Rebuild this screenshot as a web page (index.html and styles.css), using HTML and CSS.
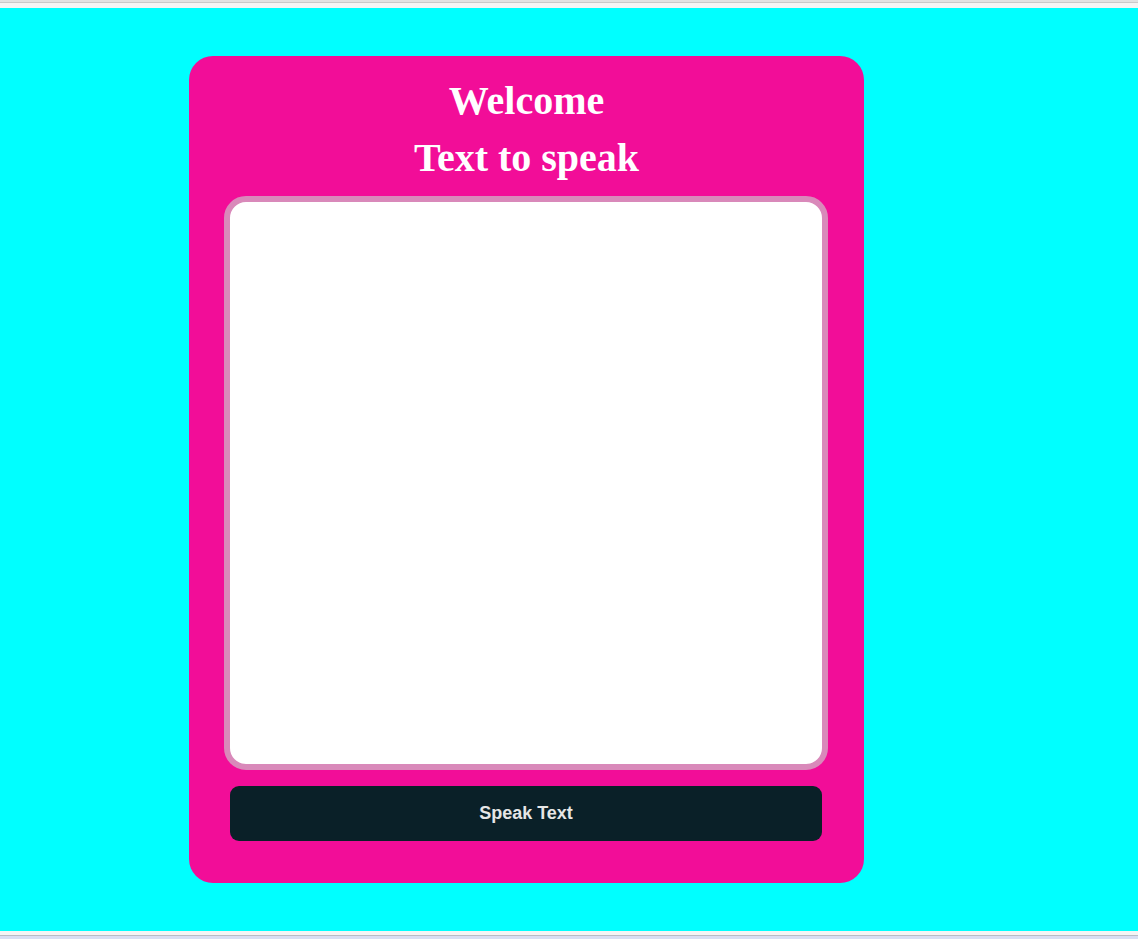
FILE: index.html
```html
<!DOCTYPE html>
<html lang="en">
<head>
<meta charset="utf-8">
<title>Text to speak</title>
<link rel="stylesheet" href="styles.css">
</head>
<body>
<div class="chrome-top"></div>
<main class="stage">
  <section class="card">
    <h1 class="title">Welcome</h1>
    <h1 class="title">Text to speak</h1>
    <textarea class="input"></textarea>
    <button class="speak" type="button">Speak Text</button>
  </section>
</main>
<div class="chrome-bottom"></div>
</body>
</html>
```
FILE: styles.css
```css
html, body {
  margin: 0;
  padding: 0;
}
body {
  width: 1138px;
  height: 939px;
  overflow: hidden;
  display: flex;
  flex-direction: column;
  background: #ffffff;
}
.chrome-top {
  height: 8px;
  box-sizing: border-box;
  background: #f4f4f4;
  border-top: 2px solid #e2e2e2;
  box-shadow: inset 0 1px 0 #c9c9c9;
}
.stage {
  height: 923px;
  background: #00ffff;
  padding-top: 48px;
  padding-left: 189px;
  box-sizing: border-box;
}
.chrome-bottom {
  height: 8px;
  box-sizing: border-box;
  background: #d8def2;
  border-top: 4px solid #f4f4f4;
  box-shadow: inset 0 1px 0 #b9bcc4;
}
.card {
  width: 675px;
  height: 827px;
  box-sizing: border-box;
  background: #f20d98;
  border-radius: 24px;
  padding: 16px 35px 0;
  display: flex;
  flex-direction: column;
  align-items: flex-start;
}
.title {
  margin: 0;
  align-self: stretch;
  font-family: "Liberation Serif", "Times New Roman", serif;
  font-weight: 700;
  font-size: 40px;
  line-height: 57px;
  color: #ffffff;
  text-align: center;
}
.input {
  margin-top: 10px;
  width: 604px;
  height: 574px;
  box-sizing: border-box;
  border: 6px solid #d989ba;
  border-radius: 22px;
  background: #ffffff;
  resize: none;
  outline: none;
  padding: 8px;
  font-family: "Liberation Sans", Arial, sans-serif;
  font-size: 16px;
}
.speak {
  margin: 16px 0 0 6px;
  width: 592px;
  height: 55px;
  border: none;
  border-radius: 9px;
  background: #0a2028;
  color: #e6e6e6;
  font-family: "Liberation Sans", Arial, sans-serif;
  font-weight: 700;
  font-size: 18px;
  cursor: pointer;
}
```
